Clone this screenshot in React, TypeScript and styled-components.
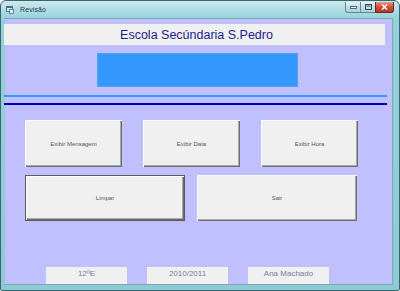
import React from "react";
import styled, { createGlobalStyle } from "styled-components";

const Global = createGlobalStyle`
  html, body { margin: 0; padding: 0; background: #ffffff; }
  body { width: 400px; height: 291px; overflow: hidden; font-family: "Liberation Sans", Arial, sans-serif; }
  * { box-sizing: border-box; }
`;

const Window = styled.div`
  width: 400px;
  height: 291px;
  display: flex;
  flex-direction: column;
  border: 1px solid #3a6570;
  border-radius: 6px 6px 2px 2px;
  background: linear-gradient(180deg, #cdeaee 0px, #addde5 9px, #94d1db 18px, #8ccbd6 100%);
  padding: 0 6px 5px 3px;
`;

const TitleBar = styled.div`
  height: 17px;
  flex: none;
  display: flex;
  align-items: center;
  gap: 6px;
  padding-left: 2px;
`;

const TitleText = styled.span`
  font-size: 7px;
  color: #2c3a3e;
  letter-spacing: 0.1px;
`;

const Controls = styled.div`
  margin-left: auto;
  display: flex;
  align-self: flex-start;
  margin-top: 1px;
  margin-right: -1px;
`;

const CtlButton = styled.div<{ $close?: boolean; $w: number }>`
  width: ${(p) => p.$w}px;
  height: 11px;
  border: 1px solid ${(p) => (p.$close ? "#6e2a23" : "#5f8a93")};
  border-top: none;
  background: ${(p) =>
    p.$close
      ? "linear-gradient(180deg, #e89a8c 0%, #d2553f 45%, #b8321f 100%)"
      : "linear-gradient(180deg, #e4f3f5 0%, #c3e1e6 45%, #a9d2da 100%)"};
  display: flex;
  align-items: center;
  justify-content: center;
  & + & { margin-left: -1px; }
  &:first-child { border-bottom-left-radius: 3px; }
  &:last-child { border-bottom-right-radius: 3px; }
`;

const Client = styled.div`
  flex: 1;
  background: #c0c0ff;
  border: 1px solid #7aa7b0;
  border-left-color: #9cc6cf;
  display: flex;
  flex-direction: column;
`;

const Header = styled.div`
  margin-top: 5px;
  width: 381px;
  height: 21px;
  background: #f0f0f0;
  display: flex;
  align-items: center;
  justify-content: center;
  font-size: 12.5px;
  color: #1c1c8e;
  padding-left: 4px;
  margin-left: -1px;
`;

const BlueBox = styled.div`
  margin-top: 8px;
  margin-left: 92px;
  width: 201px;
  height: 34px;
  background: #3399ff;
  border: 1px solid #58a2e6;
`;

const Rule = styled.div<{ $color: string; $gap: number }>`
  margin-top: ${(p) => p.$gap}px;
  width: 383px;
  height: 2px;
  margin-left: -1px;
  background: ${(p) => p.$color};
`;

const ButtonRow = styled.div<{ $gap: number; $top: number }>`
  display: flex;
  gap: ${(p) => p.$gap}px;
  margin-top: ${(p) => p.$top}px;
  margin-left: 20px;
`;

const Button = styled.div<{ $w: number; $h: number; $default?: boolean }>`
  width: ${(p) => p.$w}px;
  height: ${(p) => p.$h}px;
  background: #f0f0f0;
  display: flex;
  align-items: center;
  justify-content: center;
  font-size: 6px;
  color: #555555;
  border: ${(p) => (p.$default ? "1px solid #5a5a5a" : "none")};
  box-shadow: ${(p) =>
    p.$default
      ? "inset 1px 1px #ffffff, inset -1px -1px #6a6a6a, inset -2px -2px #a8a8a8"
      : "inset 1px 1px #fbfbfb, inset -1px -1px #6e6e6e, inset -2px -2px #a8a8a8"};
`;

const Footer = styled.div`
  margin-top: auto;
  display: flex;
  gap: 20px;
  margin-left: 41px;
`;

const Label = styled.div`
  width: 81px;
  height: 17px;
  background: #f0f0f0;
  color: #7b7b9e;
  font-size: 8px;
  text-align: center;
  padding-top: 2px;
  line-height: 9px;
`;

function AppIcon() {
  return (
    <svg width="8" height="8" viewBox="0 0 8 8">
      <rect x="0.5" y="0.5" width="6" height="5" fill="#ffffff" stroke="#4d6b8a" strokeWidth="1" />
      <rect x="1" y="1" width="5" height="1.2" fill="#3a6fb0" />
      <rect x="3.5" y="3.5" width="4" height="4" fill="#e8eef5" stroke="#4d6b8a" strokeWidth="0.8" />
    </svg>
  );
}

export default function App() {
  return (
    <>
      <Global />
      <Window>
        <TitleBar>
          <AppIcon />
          <TitleText>Revisão</TitleText>
          <Controls>
            <CtlButton $w={16}>
              <svg width="7" height="3" viewBox="0 0 7 3">
                <rect x="0.5" y="0.5" width="6" height="2" fill="#ffffff" stroke="#3a4a55" strokeWidth="0.8" />
              </svg>
            </CtlButton>
            <CtlButton $w={16}>
              <svg width="7" height="6" viewBox="0 0 7 6">
                <rect x="0.5" y="0.5" width="6" height="5" fill="none" stroke="#3a4a55" strokeWidth="1" />
                <rect x="1.5" y="1.5" width="4" height="1" fill="#3a4a55" />
              </svg>
            </CtlButton>
            <CtlButton $w={19} $close>
              <svg width="7" height="6" viewBox="0 0 7 6">
                <path d="M1 0.5 L6 5.5 M6 0.5 L1 5.5" stroke="#ffffff" strokeWidth="1.5" />
              </svg>
            </CtlButton>
          </Controls>
        </TitleBar>
        <Client>
          <Header>Escola Secúndaria S.Pedro</Header>
          <BlueBox />
          <Rule $color="#3399ff" $gap={8} />
          <Rule $color="#0000a8" $gap={6} />
          <ButtonRow $gap={21} $top={15}>
            <Button $w={97} $h={47}>Exibir Mensagem</Button>
            <Button $w={97} $h={47}>Exibir Data</Button>
            <Button $w={97} $h={47}>Exibir Hora</Button>
          </ButtonRow>
          <ButtonRow $gap={12} $top={8}>
            <Button $w={160} $h={46} $default>Limpar</Button>
            <Button $w={160} $h={46}>Sair</Button>
          </ButtonRow>
          <Footer>
            <Label>12ºE</Label>
            <Label>2010/2011</Label>
            <Label>Ana Machado</Label>
          </Footer>
        </Client>
      </Window>
    </>
  );
}
